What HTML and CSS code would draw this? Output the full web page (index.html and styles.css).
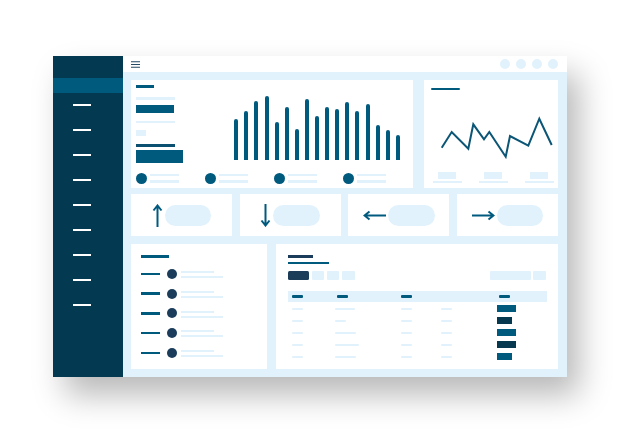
FILE: index.html
```html
<!DOCTYPE html>
<html>
<head>
<meta charset="utf-8">
<title>Dashboard</title>
<link rel="stylesheet" href="styles.css">
</head>
<body>
<div class="window">
  <aside class="sidebar">
    <div class="nav-active"></div>
    <ul class="nav">
      <li></li><li></li><li></li><li></li><li></li><li></li><li></li><li></li><li></li>
    </ul>
  </aside>
  <div class="main">
    <header class="topbar">
      <svg class="menu" width="9" height="7" viewBox="0 0 9 7"><path d="M0 0.7H9M0 3.5H9M0 6.3H9" stroke="#244a66" stroke-width="1.1" fill="none"/></svg>
      <div class="dots"><span></span><span></span><span></span><span></span></div>
    </header>
    <div class="content">
      <div class="row row1">
        <section class="card card-bars">
          <div class="bars-top">
            <div class="summary">
              <span class="s s1"></span>
              <span class="s s2"></span>
              <span class="s s3"></span>
              <span class="s s4"></span>
              <span class="s s5"></span>
              <span class="s s6"></span>
              <span class="s s7"></span>
            </div>
            <div class="bars">
              <span class="bar" style="height:40.7px"></span>
              <span class="bar" style="height:49.3px"></span>
              <span class="bar" style="height:58.7px"></span>
              <span class="bar" style="height:64.3px"></span>
              <span class="bar" style="height:38.3px"></span>
              <span class="bar" style="height:53.3px"></span>
              <span class="bar" style="height:31.3px"></span>
              <span class="bar" style="height:60.7px"></span>
              <span class="bar" style="height:43.7px"></span>
              <span class="bar" style="height:53.3px"></span>
              <span class="bar" style="height:50.7px"></span>
              <span class="bar" style="height:58.3px"></span>
              <span class="bar" style="height:49.3px"></span>
              <span class="bar" style="height:55.7px"></span>
              <span class="bar" style="height:34.7px"></span>
              <span class="bar" style="height:29.7px"></span>
              <span class="bar" style="height:24.7px"></span>
            </div>
          </div>
          <div class="legend">
            <div class="legend-item"><span class="dot"></span><span class="lines"><i></i><i></i></span></div>
            <div class="legend-item"><span class="dot"></span><span class="lines"><i></i><i></i></span></div>
            <div class="legend-item"><span class="dot"></span><span class="lines"><i></i><i></i></span></div>
            <div class="legend-item"><span class="dot"></span><span class="lines"><i></i><i></i></span></div>
          </div>
        </section>
        <section class="card card-line">
          <span class="line-title"></span>
          <svg class="line-chart" width="134" height="80" viewBox="0 0 134 80">
            <polyline points="17.7,57.7 27.7,42 44.3,58.7 49.3,34.3 60,49.3 65.3,42 81.7,66.7 86,46 104.3,55.7 115.3,28.7 127.7,55" fill="none" stroke="#0b5676" stroke-width="2" stroke-linejoin="miter"/>
          </svg>
          <div class="axis">
            <div class="tick"><span class="tick-box"></span><span class="tick-line"></span></div>
            <div class="tick"><span class="tick-box"></span><span class="tick-line"></span></div>
            <div class="tick"><span class="tick-box"></span><span class="tick-line"></span></div>
          </div>
        </section>
      </div>
      <div class="row row2">
        <section class="card stat">
          <svg class="arrow-v" width="11" height="23" viewBox="0 0 11 23"><path d="M5.5 1.5V23M1.5 6.5L5.5 1.5L9.5 6.5" fill="none" stroke="#005a7e" stroke-width="2"/></svg>
          <span class="pill"></span>
        </section>
        <section class="card stat">
          <svg class="arrow-v" width="11" height="23" viewBox="0 0 11 23"><path d="M5.5 0V21.5M1.5 16.5L5.5 21.5L9.5 16.5" fill="none" stroke="#005a7e" stroke-width="2"/></svg>
          <span class="pill"></span>
        </section>
        <section class="card stat">
          <svg class="arrow-h" width="23" height="11" viewBox="0 0 23 11"><path d="M1.5 5.5H23M6.5 1.5L1.5 5.5L6.5 9.5" fill="none" stroke="#005a7e" stroke-width="2"/></svg>
          <span class="pill"></span>
        </section>
        <section class="card stat">
          <svg class="arrow-h" width="23" height="11" viewBox="0 0 23 11"><path d="M0 5.5H21.5M16.5 1.5L21.5 5.5L16.5 9.5" fill="none" stroke="#005a7e" stroke-width="2"/></svg>
          <span class="pill"></span>
        </section>
      </div>
      <div class="row row3">
        <section class="card card-list">
          <span class="list-title"></span>
          <ul class="list">
            <li><span class="dash"></span><span class="avatar"></span><span class="text"><i class="t1"></i><i class="t2"></i></span></li>
            <li><span class="dash"></span><span class="avatar"></span><span class="text"><i class="t1"></i><i class="t2"></i></span></li>
            <li><span class="dash"></span><span class="avatar"></span><span class="text"><i class="t1"></i><i class="t2"></i></span></li>
            <li><span class="dash"></span><span class="avatar"></span><span class="text"><i class="t1"></i><i class="t2"></i></span></li>
            <li><span class="dash"></span><span class="avatar"></span><span class="text"><i class="t1"></i><i class="t2"></i></span></li>
          </ul>
        </section>
        <section class="card card-table">
          <span class="tt1"></span>
          <span class="tt2"></span>
          <div class="toolbar">
            <div class="tabs"><span class="tab active"></span><span class="tab w12"></span><span class="tab w12"></span><span class="tab w13"></span></div>
            <div class="tools"><span class="search"></span><span class="btn"></span></div>
          </div>
          <div class="table">
            <div class="trow thead">
              <span class="cell"><i class="h"></i></span>
              <span class="cell c2h"><i class="h"></i></span>
              <span class="cell"><i class="h"></i></span>
              <span class="cell"></span>
              <span class="cell c5h"><i class="h"></i></span>
            </div>
            <div class="trow">
              <span class="cell"><i class="d w11"></i></span>
              <span class="cell"><i class="d" style="width:19.3px"></i></span>
              <span class="cell"><i class="d w11"></i></span>
              <span class="cell"><i class="d w11"></i></span>
              <span class="cell"><b class="badge teal" style="width:18.7px"></b></span>
            </div>
            <div class="trow">
              <span class="cell"><i class="d w11"></i></span>
              <span class="cell"><i class="d" style="width:10.7px"></i></span>
              <span class="cell"><i class="d w11"></i></span>
              <span class="cell"><i class="d w11"></i></span>
              <span class="cell"><b class="badge navy" style="width:14.7px"></b></span>
            </div>
            <div class="trow">
              <span class="cell"><i class="d w11"></i></span>
              <span class="cell"><i class="d" style="width:21px"></i></span>
              <span class="cell"><i class="d w11"></i></span>
              <span class="cell"><i class="d w11"></i></span>
              <span class="cell"><b class="badge teal" style="width:18.7px"></b></span>
            </div>
            <div class="trow">
              <span class="cell"><i class="d w11"></i></span>
              <span class="cell"><i class="d" style="width:24px"></i></span>
              <span class="cell"><i class="d w11"></i></span>
              <span class="cell"><i class="d w11"></i></span>
              <span class="cell"><b class="badge navy" style="width:18.7px"></b></span>
            </div>
            <div class="trow">
              <span class="cell"><i class="d w11"></i></span>
              <span class="cell"><i class="d" style="width:20.7px"></i></span>
              <span class="cell"><i class="d w11"></i></span>
              <span class="cell"><i class="d w11"></i></span>
              <span class="cell"><b class="badge teal" style="width:15px"></b></span>
            </div>
          </div>
        </section>
      </div>
    </div>
  </div>
</div>
</body>
</html>
```

FILE: styles.css
```css
* { box-sizing: border-box; }
html, body { margin: 0; padding: 0; background: #ffffff; }
body { font-family: "Liberation Sans", Arial, sans-serif; width: 620px; height: 440px; overflow: hidden; }

.window {
  margin: 56px 0 0 53px;
  width: 514px;
  height: 321px;
  display: flex;
  box-shadow: 12px 18px 30px rgba(0, 0, 0, 0.28);
  background: #e1f2fc;
}

/* sidebar */
.sidebar {
  width: 70px;
  flex: none;
  background: #033a51;
  padding-top: 22px;
}
.nav-active { height: 15px; background: #005a7e; }
.nav {
  list-style: none;
  margin: 11px 0 0 0;
  padding: 0 0 0 20px;
  display: flex;
  flex-direction: column;
  gap: 23px;
}
.nav li { width: 18px; height: 2px; background: #ffffff; }

/* main */
.main { flex: 1; display: flex; flex-direction: column; min-width: 0; }
.topbar {
  height: 16px;
  background: #ffffff;
  display: flex;
  align-items: center;
  justify-content: space-between;
  padding: 0 9.3px 0 8px;
}
.menu { display: block; }
.dots { display: flex; gap: 6px; }
.dots span { width: 10px; height: 10px; border-radius: 50%; background: #e1f2fc; }

.content {
  flex: 1;
  padding: 8px 9px 8px 8px;
  display: flex;
  flex-direction: column;
}
.row { display: grid; }
.row1 { grid-template-columns: 282px 134px; column-gap: 11px; height: 108px; }
.row2 { grid-template-columns: repeat(4, 1fr); column-gap: 7.5px; height: 42px; margin-top: 6px; }
.row3 { grid-template-columns: 136px 282px; column-gap: 9px; height: 125px; margin-top: 8px; }
.card { background: #ffffff; }

/* bar card */
.card-bars { padding: 5px 0 0 5px; }
.bars-top { display: flex; align-items: flex-start; }
.summary { width: 98.3px; flex: none; display: flex; flex-direction: column; align-items: flex-start; }
.s { display: block; }
.s1 { width: 18px; height: 2.5px; background: #005a7e; }
.s2 { width: 39px; height: 2.5px; background: #e1f2fc; margin-top: 9.8px; }
.s3 { width: 38px; height: 7.4px; background: #005a7e; margin-top: 5.5px; }
.s4 { width: 39px; height: 2.5px; background: #e1f2fc; margin-top: 8.3px; }
.s5 { width: 9.7px; height: 6px; background: #e1f2fc; margin-top: 6.5px; }
.s6 { width: 39px; height: 2.5px; background: #0b5070; margin-top: 8.3px; }
.s7 { width: 47px; height: 13.3px; background: #005a7e; margin-top: 3.2px; }
.bars { display: flex; align-items: flex-end; gap: 6.1px; height: 75px; }
.bar { display: block; width: 4px; background: #005a7e; border-radius: 2px 2px 0 0; }

.legend { display: flex; margin-top: 9.7px; }
.legend-item { width: 69px; display: flex; align-items: center; }
.dot { width: 11px; height: 11px; border-radius: 50%; background: #005a7e; }
.lines { display: flex; flex-direction: column; gap: 4px; margin-left: 3px; }
.lines i { display: block; width: 29px; height: 2.5px; background: #e1f2fc; }

/* line card */
.card-line { display: flex; flex-direction: column; }
.line-title { display: block; width: 29px; height: 2.5px; background: #005a7e; margin: 7.7px 0 0 7px; border-radius: 1px; }
.line-chart { display: block; }
.axis { display: grid; grid-template-columns: repeat(3, 46px); margin-top: 2px; }
.tick { display: flex; flex-direction: column; align-items: center; gap: 2.6px; }
.tick-box { width: 18px; height: 6.7px; background: #e1f2fc; }
.tick-line { width: 29px; height: 2px; background: #e1f2fc; }

/* stat cards */
.stat { display: flex; align-items: center; justify-content: center; gap: 2px; }
.stat svg { display: block; flex: none; }
.pill { width: 46.5px; height: 21px; border-radius: 11px; background: #e1f2fc; }

/* list card */
.card-list { padding: 11px 0 0 10px; }
.list-title { display: block; width: 28px; height: 2.5px; background: #005a7e; }
.list { list-style: none; margin: 6.6px 0 0 0; padding: 0; }
.list li { height: 19.75px; display: flex; align-items: center; }
.dash { width: 19px; height: 2.5px; background: #005a7e; }
.avatar { width: 10px; height: 10px; border-radius: 50%; background: #1b3d5b; margin-left: 6.7px; }
.text { display: flex; flex-direction: column; gap: 3px; margin-left: 4.3px; padding-top: 1.5px; }
.text i { display: block; height: 2px; background: #e1f2fc; }
.text .t1 { width: 33px; }
.text .t2 { width: 41.7px; }

/* table card */
.card-table { padding: 11px 11.3px 0 12.3px; display: flex; flex-direction: column; align-items: flex-start; }
.tt1 { display: block; width: 25px; height: 2.5px; background: #1b3d5b; }
.tt2 { display: block; width: 40.7px; height: 2.5px; background: #005a7e; margin-top: 4.2px; }
.toolbar { align-self: stretch; display: flex; justify-content: space-between; margin-top: 6.5px; height: 9.7px; }
.tabs, .tools { display: flex; gap: 2.8px; }
.tab { height: 9.7px; border-radius: 1px; background: #e1f2fc; }
.tab.active { width: 20.7px; background: #1c3d5a; border-radius: 1.5px; }
.tab.w12 { width: 12.4px; }
.tab.w13 { width: 13.3px; }
.search { width: 40.7px; height: 9.7px; background: #e1f2fc; border-radius: 1px; }
.btn { width: 12.7px; height: 9.7px; background: #e1f2fc; border-radius: 1px; margin-right: 0.7px; }

.table { align-self: stretch; margin-top: 10.7px; display: flex; flex-direction: column; }
.trow { display: grid; grid-template-columns: 43px 66px 40px 56px 1fr; height: 12px; align-items: center; }
.trow.thead { height: 11.3px; background: #e1f2fc; margin-bottom: 0.5px; }
.cell { display: flex; align-items: center; padding-left: 4px; }
.c2h { padding-left: 5.4px; }
.c5h { padding-left: 5.7px; }
.cell i, .cell b { display: block; }
.h { width: 11px; height: 2.5px; background: #005a7e; border-radius: 1px; }
.d { height: 2.5px; background: #e1f2fc; border-radius: 1px; }
.w11 { width: 11px; }
.badge { height: 7px; }
.badge.teal { background: #005a7e; }
.badge.navy { background: #06394f; }
```
